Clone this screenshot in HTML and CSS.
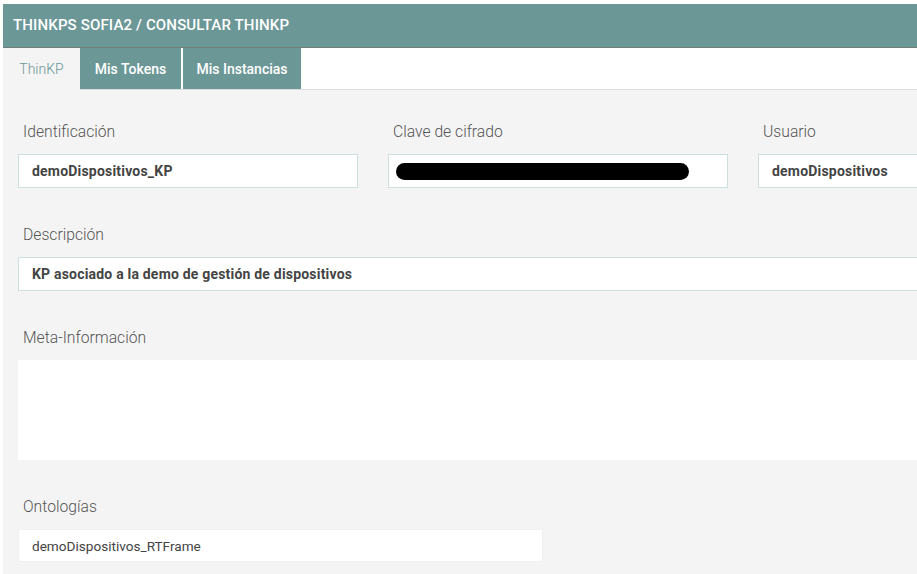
FILE: index.html
```html
<!DOCTYPE html>
<html lang="es">
<head>
<meta charset="utf-8">
<title>ThinKPs Sofia2 / Consultar ThinKP</title>
<link rel="stylesheet" href="styles.css">
</head>
<body>
<div class="app">
  <header class="page-header">THINKPS SOFIA2 / CONSULTAR THINKP</header>
  <nav class="tabs">
    <span class="tab tab-active">ThinKP</span>
    <span class="tab">Mis Tokens</span>
    <span class="tab">Mis Instancias</span>
  </nav>
  <main class="content">
    <div class="row-3">
      <div class="field">
        <label class="label">Identificación</label>
        <div class="input">demoDispositivos_KP</div>
      </div>
      <div class="field">
        <label class="label">Clave de cifrado</label>
        <div class="input"><span class="redacted"></span></div>
      </div>
      <div class="field">
        <label class="label">Usuario</label>
        <div class="input">demoDispositivos</div>
      </div>
    </div>
    <div class="field">
      <label class="label">Descripción</label>
      <div class="input input-wide">KP asociado a la demo de gestión de dispositivos</div>
    </div>
    <div class="field">
      <label class="label">Meta-Información</label>
      <div class="textarea"></div>
    </div>
    <div class="field">
      <label class="label">Ontologías</label>
      <div class="select">demoDispositivos_RTFrame</div>
    </div>
  </main>
</div>
</body>
</html>
```
FILE: styles.css
```css
html, body {
  margin: 0;
  padding: 0;
  background: #ffffff;
  overflow: hidden;
  height: 574px;
}
body {
  font-family: Roboto, "Open Sans", sans-serif;
}
.app {
  margin: 4px 0 0 3px;
  background: #f4f4f4;
  height: 570px;
  width: 1200px;
}
.page-header {
  height: 43px;
  background: #6b9797;
  border-bottom: 1px solid #6f7d7d;
  color: #ffffff;
  font-size: 15px;
  font-weight: 500;
  line-height: 43px;
  padding-left: 10px;
  letter-spacing: 0.15px;
}
.tabs {
  display: flex;
  height: 41px;
  background: #ffffff;
  border-bottom: 1px solid #dddddd;
}
.tab {
  display: flex;
  align-items: center;
  justify-content: center;
  background: #6b9797;
  color: #ffffff;
  font-size: 14px;
  font-weight: 500;
  margin-right: 2px;
}
.tab:nth-child(2) { width: 101px; }
.tab:nth-child(3) { width: 118px; }
.tab-active {
  width: 77px;
  background: #f4f4f4;
  color: #6b9797;
  font-weight: 300;
  margin-right: 0;
  height: 42px;
}
.content {
  padding: 31px 0 0 15px;
  display: flex;
  flex-direction: column;
  gap: 36px;
}
.row-3 {
  display: flex;
  gap: 30px;
}
.row-3 .field { width: 340px; }
.field {
  display: flex;
  flex-direction: column;
  gap: 11px;
}
.label {
  display: block;
  height: 22px;
  line-height: 22px;
  padding-left: 5px;
  font-size: 15.7px;
  font-weight: 300;
  color: #555555;
}
.input {
  box-sizing: border-box;
  height: 34px;
  background: #ffffff;
  border: 1px solid #cddfdf;
  padding-left: 13px;
  display: flex;
  align-items: center;
  font-size: 14px;
  font-weight: 700;
  letter-spacing: 0.2px;
  color: #444444;
}
.input-wide { width: 1000px; }
.redacted {
  display: block;
  width: 293px;
  height: 17px;
  background: #000000;
  border-radius: 9px;
  margin-left: -6px;
}
.textarea {
  height: 100px;
  width: 1000px;
  background: #ffffff;
}
.select {
  box-sizing: border-box;
  width: 525px;
  height: 33px;
  background: #ffffff;
  border: 1px solid #f0f0f0;
  padding-left: 13px;
  display: flex;
  align-items: center;
  font-size: 13.6px;
  font-weight: 400;
  color: #444444;
}
```
